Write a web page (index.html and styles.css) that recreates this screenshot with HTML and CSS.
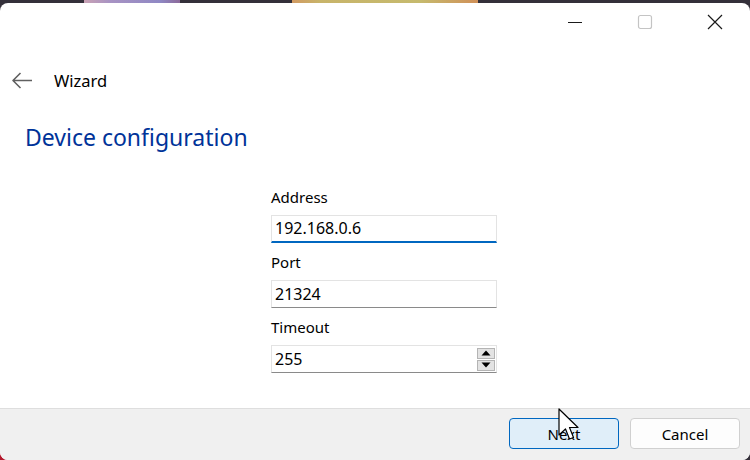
FILE: index.html
```html
<!DOCTYPE html>
<html>
<head>
<meta charset="utf-8">
<link rel="stylesheet" href="styles.css">
</head>
<body>
<div class="window">
  <div class="titlebar">
    <div class="cap-btn">
      <svg width="16" height="16" viewBox="0 0 16 16"><path d="M1 8.5 H15" stroke="#1a1a1a" stroke-width="1.2" fill="none"/></svg>
    </div>
    <div class="cap-btn">
      <svg width="16" height="16" viewBox="0 0 16 16"><rect x="1.5" y="1.5" width="13" height="13" rx="2" stroke="#c4c4c4" stroke-width="1.2" fill="none"/></svg>
    </div>
    <div class="cap-btn">
      <svg width="16" height="16" viewBox="0 0 16 16"><path d="M1 1 L15 15 M15 1 L1 15" stroke="#1a1a1a" stroke-width="1.2" fill="none"/></svg>
    </div>
  </div>

  <div class="nav">
    <svg class="back" width="22" height="24" viewBox="0 0 22 24"><path d="M21 11.5 H2 M9.5 4 L2 11.5 L9.5 19" stroke="#606060" stroke-width="1.6" fill="none" stroke-linejoin="round"/></svg>
    <span class="nav-title">Wizard</span>
  </div>

  <div class="main">
    <h1 class="page-title">Device configuration</h1>
    <div class="form">
      <div class="label first">Address</div>
      <div class="field focused">192.168.0.6</div>
      <div class="label">Port</div>
      <div class="field">21324</div>
      <div class="label">Timeout</div>
      <div class="field spin">
        <span>255</span>
        <div class="spin-btns">
          <div class="spin-btn"><svg width="10" height="6" viewBox="0 0 10 6"><path d="M0.5 5.5 L5 0.5 L9.5 5.5 Z" fill="#000"/></svg></div>
          <div class="spin-btn"><svg width="10" height="6" viewBox="0 0 10 6"><path d="M0.5 0.5 L5 5.5 L9.5 0.5 Z" fill="#000"/></svg></div>
        </div>
      </div>
    </div>
  </div>

  <div class="footer">
    <div class="btn primary">Next</div>
    <div class="btn">Cancel</div>
  </div>

  <svg class="cursor" width="22" height="34" viewBox="0 0 22 34"><path d="M1 1 L1 27 L7.5 21 L11.5 31 L15.5 29.5 L11.5 19.5 L20 19.5 Z" fill="#fff" stroke="#000" stroke-width="1.2" stroke-linejoin="round"/></svg>
</div>
</body>
</html>
```

FILE: styles.css
```css
html, body {
  margin: 0;
  padding: 0;
}
body {
  width: 750px;
  height: 460px;
  overflow: hidden;
  font-family: "Noto Sans", "Open Sans", sans-serif;
  color: #000;
  background:
    linear-gradient(#b3182c, #b3182c) left bottom / 8px 8px no-repeat,
    linear-gradient(90deg,
      #34303a 0, #34303a 84px,
      #c9a2b4 84px, #a893c3 110px, #8f88c4 160px, #8c6a9a 180px,
      #34303a 180px, #34303a 292px,
      #d19a62 292px, #c8b46a 320px, #c6ba6e 420px, #d09058 478px,
      #34303a 478px, #34303a 750px) top left / 750px 4px no-repeat,
    #34303a;
}
.window {
  position: relative;
  margin-top: 3px;
  width: 750px;
  height: 457px;
  background: #fff;
  border-radius: 8px;
  overflow: hidden;
  display: flex;
  flex-direction: column;
}
.titlebar {
  height: 38px;
  display: flex;
  justify-content: flex-end;
  flex: none;
}
.cap-btn {
  width: 70px;
  height: 38px;
  display: flex;
  align-items: center;
  justify-content: center;
}
.nav {
  margin-top: 28px;
  height: 24px;
  display: flex;
  align-items: center;
  padding-left: 11px;
  flex: none;
}
.back {
  display: block;
  margin-right: 21px;
}
.nav-title {
  font-size: 16.5px;
  line-height: 24px;
}
.main {
  flex: 1;
  display: flex;
  flex-direction: column;
}
.page-title {
  margin: 29px 0 0 25px;
  font-size: 23px;
  line-height: 30px;
  font-weight: normal;
  color: #003399;
}
.form {
  margin: 35px 0 0 271px;
  width: 226px;
  display: flex;
  flex-direction: column;
}
.label {
  font-size: 15px;
  line-height: 20px;
  margin-top: 9px;
  margin-bottom: 8px;
}
.label.first {
  margin-top: 0;
}
.field {
  box-sizing: border-box;
  height: 28px;
  border: 1px solid #e3e3e3;
  border-bottom-color: #8a8a8a;
  font-size: 16px;
  line-height: 26px;
  padding: 0 3px;
  background: #fff;
}
.field.focused {
  border-bottom: 2px solid #0067c0;
  line-height: 25px;
}
.spin {
  display: flex;
  align-items: center;
  justify-content: space-between;
  padding-right: 1px;
}
.spin-btns {
  display: flex;
  flex-direction: column;
  gap: 1px;
}
.spin-btn {
  box-sizing: border-box;
  width: 18px;
  height: 11px;
  background: #e3e3e3;
  border: 1px solid #b4b4b4;
  display: flex;
  align-items: center;
  justify-content: center;
}
.spin-btn svg {
  display: block;
}
.footer {
  flex: none;
  box-sizing: border-box;
  height: 52px;
  border-top: 1px solid #dedede;
  background: #f0f0f0;
  display: flex;
  justify-content: flex-end;
  gap: 11px;
  padding: 9px 10px 0 0;
}
.btn {
  box-sizing: border-box;
  width: 110px;
  height: 31px;
  border: 1px solid #d0d0d0;
  border-radius: 4px;
  background: #fdfdfd;
  font-size: 15px;
  display: flex;
  align-items: center;
  justify-content: center;
}
.btn.primary {
  background: #e0eef9;
  border-color: #0067c0;
}
.cursor {
  position: absolute;
  left: 558px;
  top: 405px;
}
```
